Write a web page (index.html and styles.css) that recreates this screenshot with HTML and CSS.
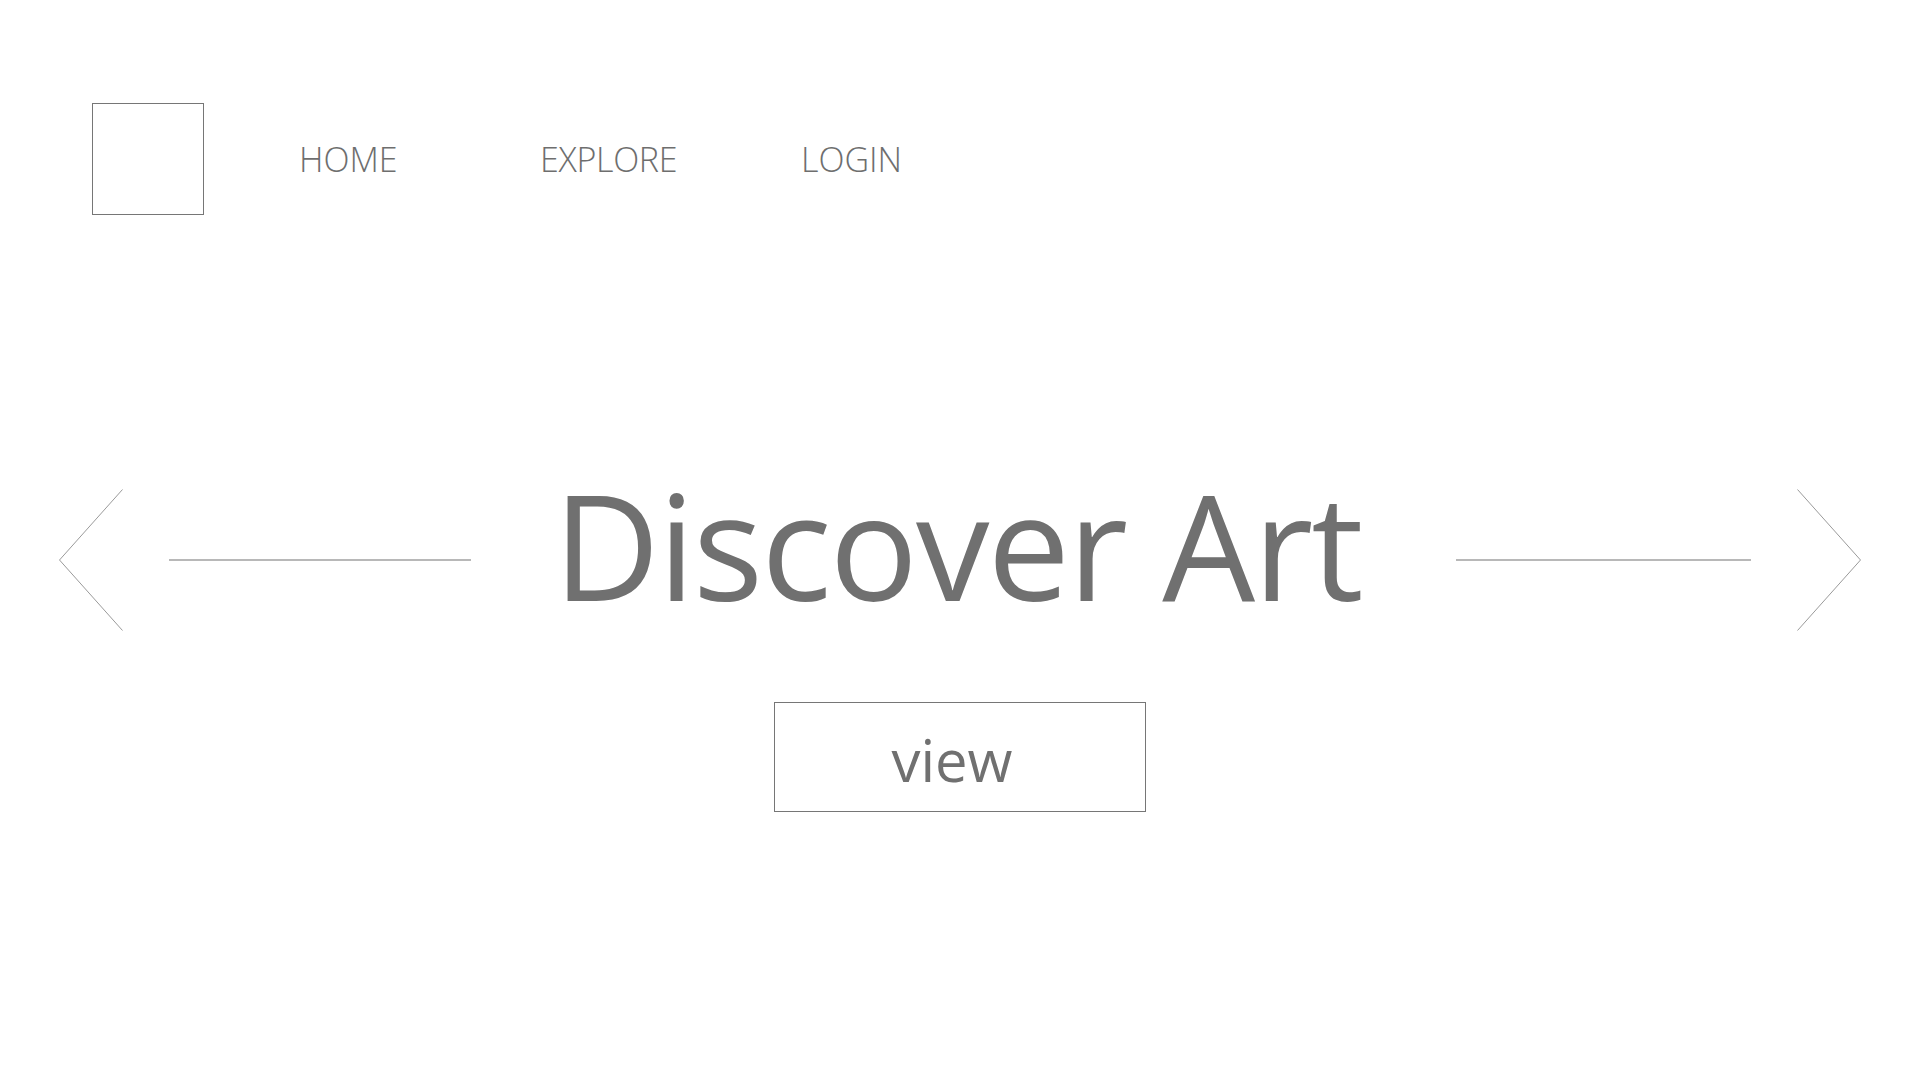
FILE: index.html
```html
<!DOCTYPE html>
<html lang="en">
<head>
<meta charset="utf-8">
<title>Discover Art</title>
<link rel="stylesheet" href="styles.css">
</head>
<body>
<div class="page">
  <header class="header">
    <div class="logo"></div>
    <nav class="nav">
      <a class="nav-item nav-home" href="#">HOME</a>
      <a class="nav-item nav-explore" href="#">EXPLORE</a>
      <a class="nav-item nav-login" href="#">LOGIN</a>
    </nav>
  </header>
  <section class="hero">
    <svg class="chevron" width="64" height="142" viewBox="0 0 64 142">
      <polyline points="63.5,0.5 0.5,71 63.5,141.5" fill="none" stroke="#9a9a9a" stroke-width="1"/>
    </svg>
    <div class="rule rule-left"></div>
    <h1 class="title">Discover Art</h1>
    <div class="rule rule-right"></div>
    <svg class="chevron" width="64" height="142" viewBox="0 0 64 142">
      <polyline points="0.5,0.5 63.5,71 0.5,141.5" fill="none" stroke="#9a9a9a" stroke-width="1"/>
    </svg>
  </section>
  <div class="actions">
    <a class="view-btn" href="#">view</a>
  </div>
</div>
</body>
</html>
```

FILE: styles.css
```css
html, body {
  margin: 0;
  padding: 0;
  background: #ffffff;
}

body {
  font-family: "Open Sans", "Noto Sans", "Liberation Sans", sans-serif;
  color: #707070;
}

.page {
  width: 1920px;
  height: 1080px;
  overflow: hidden;
}

.header {
  display: flex;
  align-items: center;
  padding: 103px 0 0 92px;
}

.logo {
  width: 110px;
  height: 110px;
  border: 1px solid #767676;
  flex: none;
}

.nav {
  display: flex;
  align-items: center;
  margin-left: 95px;
}

.nav-item {
  font-size: 34px;
  font-weight: 300;
  color: #6e6e6e;
  text-decoration: none;
  line-height: 1.362;
}

.nav-home { width: 241px; }
.nav-explore { width: 262px; letter-spacing: -0.3px; }
.nav-login { margin-left: -1px; }

.hero {
  display: flex;
  align-items: center;
  margin-top: 256px;
  padding: 0 59px;
}

.chevron {
  flex: none;
  display: block;
}

.rule {
  height: 2px;
  background: #b8b8b8;
  flex: none;
}

.rule-left {
  width: 302px;
  margin-left: 46px;
}

.rule-right {
  width: 295px;
  margin-right: 46px;
}

.title {
  flex: 1;
  margin: 0;
  text-align: center;
  font-size: 147px;
  font-weight: 400;
  line-height: 147px;
  letter-spacing: -2px;
  padding: 0 12px 30px 0;
  color: #707070;
  white-space: nowrap;
}

.actions {
  display: flex;
  justify-content: center;
  margin-top: 54px;
}

.view-btn {
  box-sizing: border-box;
  width: 372px;
  height: 110px;
  border: 1px solid #767676;
  display: flex;
  align-items: center;
  justify-content: center;
  padding: 5px 16px 0 0;
  font-size: 58px;
  color: #707070;
  text-decoration: none;
}
```
